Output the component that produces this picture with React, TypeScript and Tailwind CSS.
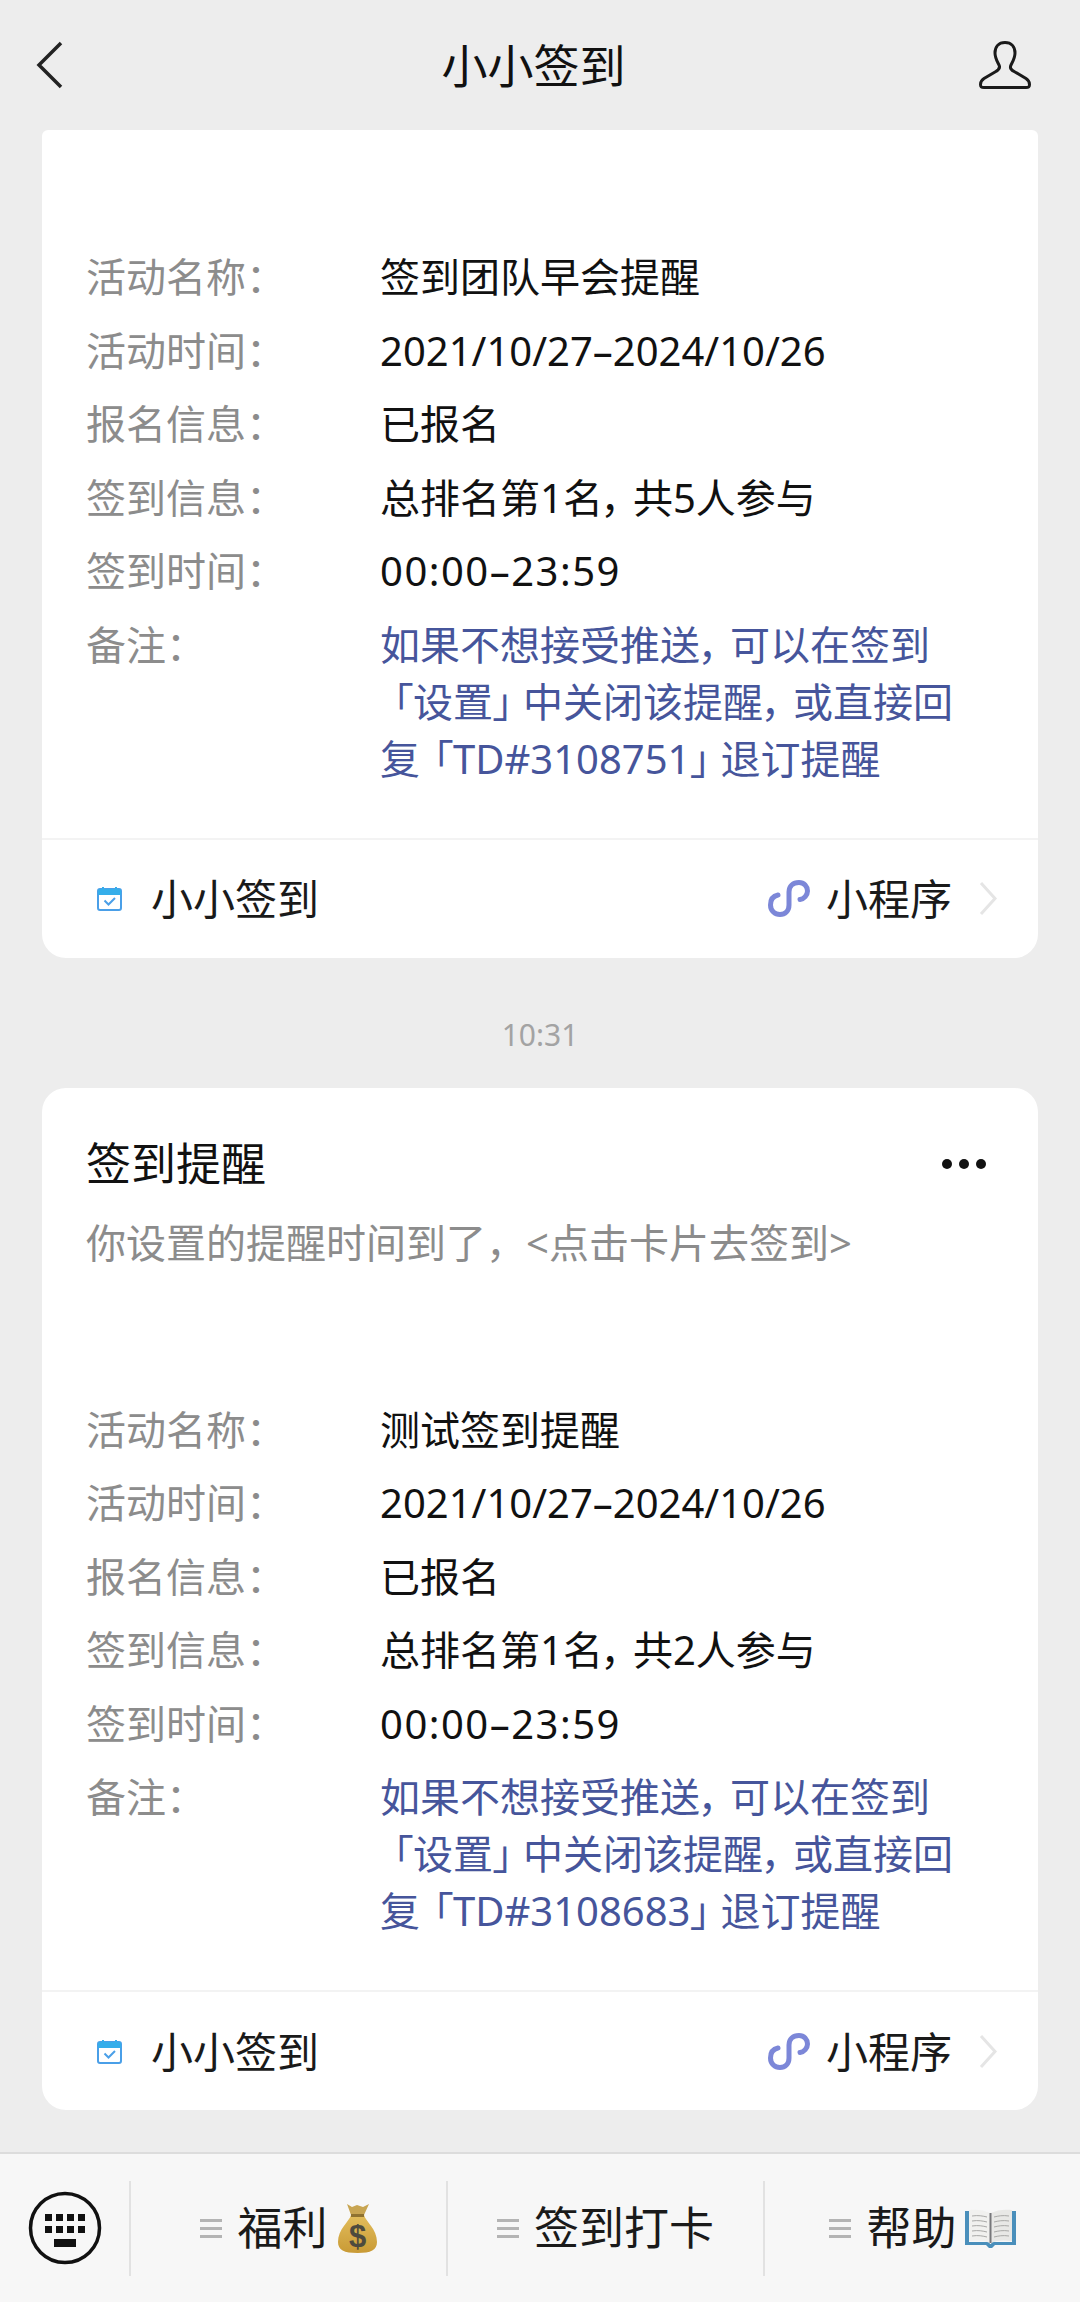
function Comma() {
  return <span className="pr-[10px] [font-feature-settings:'palt']">，</span>;
}

function OpenQuote() {
  return <span className="pl-[13px] [font-feature-settings:'palt']">「</span>;
}

function CloseQuote() {
  return <span className="pr-[10px] [font-feature-settings:'palt']">」</span>;
}

const rowsA = [
  { label: "活动名称：", value: "签到团队早会提醒" },
  { label: "活动时间：", value: "2021/10/27–2024/10/26" },
  { label: "报名信息：", value: "已报名" },
  { label: "签到信息：", value: <>总排名第1名<Comma />共5人参与</> },
  { label: "签到时间：", value: <span className="tracking-[1.5px]">00:00–23:59</span> },
];

const rowsB = [
  { label: "活动名称：", value: "测试签到提醒" },
  { label: "活动时间：", value: "2021/10/27–2024/10/26" },
  { label: "报名信息：", value: "已报名" },
  { label: "签到信息：", value: <>总排名第1名<Comma />共2人参与</> },
  { label: "签到时间：", value: <span className="tracking-[1.5px]">00:00–23:59</span> },
];

function CalendarIcon() {
  return (
    <svg width="25" height="25" viewBox="0 0 25 25" fill="none">
      <rect x="1" y="3" width="23" height="21" rx="2" stroke="#4a9fe8" strokeWidth="2" />
      <path d="M1 9V5a2 2 0 0 1 2-2h19a2 2 0 0 1 2 2v4z" fill="#35aeea" />
      <path d="M6 1v4M19 1v4" stroke="#35aeea" strokeWidth="2" />
      <path d="M7.5 14.5l4 4 6.5-6.5" stroke="#4a9fe8" strokeWidth="2" />
    </svg>
  );
}

function MiniProgramIcon() {
  return (
    <svg width="42" height="37" viewBox="0 0 42 37" fill="none">
      <path
        d="M10 15C5 16 2.5 20 2.5 25C2.5 31 7 34.5 12 34.5C17 34.5 21 31 21 25V12C21 6 25 2.5 31 2.5C36 2.5 39.5 6.5 39.5 11C39.5 15 36 19 32 19.5"
        stroke="#7c87d8"
        strokeWidth="5"
        strokeLinecap="round"
      />
    </svg>
  );
}

function Row({ label, children, blue }: { label: string; children: React.ReactNode; blue?: boolean }) {
  return (
    <div className="flex">
      <div className="w-[294px] shrink-0 text-[#8c8c8c]">{label}</div>
      <div className={blue ? "w-[610px] text-[#46559b]" : "text-[#111111]"}>{children}</div>
    </div>
  );
}

function Details({ rows, code }: { rows: { label: string; value: React.ReactNode }[]; code: string }) {
  return (
    <div className="flex flex-col gap-[16.5px] text-[40px] leading-[57px]">
      {rows.map((r) => (
        <Row key={r.label} label={r.label}>
          {r.value}
        </Row>
      ))}
      <Row label="备注：" blue>
        <div>如果不想接受推送<Comma />可以在签到</div>
        <div><OpenQuote />设置<CloseQuote />中关闭该提醒<Comma />或直接回</div>
        <div>复<OpenQuote />TD#{code}<CloseQuote />退订提醒</div>
      </Row>
    </div>
  );
}

function CardFooter() {
  return (
    <div className="flex h-[120px] items-center border-t-2 border-[#f3f3f3] pl-[55px] pr-[40px]">
      <CalendarIcon />
      <span className="ml-[29px] text-[42px] text-[#1a1a1a]">小小签到</span>
      <div className="ml-auto flex items-center">
        <MiniProgramIcon />
        <span className="ml-[16px] text-[42px] text-[#1a1a1a]">小程序</span>
        <svg className="ml-[26px]" width="20" height="35" viewBox="0 0 20 35" fill="none">
          <path d="M3 2l14 15.5L3 33" stroke="#e5e5e5" strokeWidth="3" />
        </svg>
      </div>
    </div>
  );
}

function MoneyBag() {
  return (
    <svg className="ml-[10px]" width="39" height="50" viewBox="0 0 39 50">
      <defs>
        <linearGradient id="bag" x1="0" y1="0" x2="0" y2="1">
          <stop offset="0" stopColor="#e2bd5c" />
          <stop offset="1" stopColor="#c99a35" />
        </linearGradient>
      </defs>
      <path d="M9 1l5 3 5-2 6 2 6-3-5 11H13z" fill="#c8a552" />
      <path d="M13 12h13c2 7 13 14 13 27 0 8-6 11-19.500 11S0 47 0 39c0-13 11-20 13-27z" fill="url(#bag)" />
      <path d="M13 11h13v3H13z" fill="#8f7230" />
      <text x="19.500" y="44" textAnchor="middle" fontSize="31" fontWeight="700" fill="#4d4a3e" fontFamily="Liberation Sans, sans-serif">
        $
      </text>
    </svg>
  );
}

function BookIcon() {
  return (
    <svg className="ml-[8px]" width="51" height="39" viewBox="0 0 51 39">
      <path d="M0 2h4v31h20l1 2h1l1-2h20V2h4v34H30l-3 3h-3l-3-3H0z" fill="#4a8fbb" />
      <path d="M4 1c8-1 15 0 21 3v30c-6-3-13-3-21-2z" fill="#f1f1ef" />
      <path d="M47 1c-8-1-15 0-21 3v30c6-3 13-3 21-2z" fill="#e8e8e6" />
      <path
        d="M7 7c6-1 11 0 15 1M7 12c6-1 11 0 15 1M7 17c6-1 11 0 15 1M7 22c6-1 11 0 15 1M7 27c6-1 11 0 15 1M44 7c-6-1-11 0-15 1M44 12c-6-1-11 0-15 1M44 17c-6-1-11 0-15 1M44 22c-6-1-11 0-15 1M44 27c-6-1-11 0-15 1"
        stroke="#a9a9a7"
        strokeWidth="1"
        fill="none"
      />
      <path d="M25.500 4v30" stroke="#77777a" strokeWidth="2" />
    </svg>
  );
}

function MenuItem({ label, children }: { label: string; children?: React.ReactNode }) {
  return (
    <div className="flex h-[95px] w-[317px] items-center justify-center border-l-2 border-[#e2e2e2]">
      <div className="flex w-[22px] flex-col gap-[5px]">
        <div className="h-[3px] bg-[#b4b4b4]" />
        <div className="h-[3px] bg-[#b4b4b4]" />
        <div className="h-[3px] bg-[#b4b4b4]" />
      </div>
      <span className="ml-[15px] text-[45px] text-[#1a1a1a]">{label}</span>
      {children}
    </div>
  );
}

export default function App() {
  return (
    <div className="flex h-[2302px] w-[1080px] flex-col overflow-hidden bg-[#ededed] [font-family:'Noto_Sans','Noto_Sans_CJK_SC',sans-serif]">
      {/* Header */}
      <div className="flex h-[130px] shrink-0 items-center justify-between pl-[36px] pr-[49px]">
        <svg width="28" height="48" viewBox="0 0 28 48" fill="none">
          <path d="M25 2L3 24l22 22" stroke="#222222" strokeWidth="3.500" />
        </svg>
        <span className="ml-[24px] text-[46px] text-[#111111]">小小签到</span>
        <svg width="52" height="48" viewBox="0 0 52 48" fill="none">
          <path
            d="M26 1.500C19.500 1.500 16 6 16 12C16 17 18 20 20 24C21.500 27 20 29 16 31L5 37.500C2 39.500 1.500 41 1.500 43.500C1.500 46 2.500 46.500 5 46.500H47C49.500 46.500 50.500 46 50.500 43.500C50.500 41 50 39.500 47 37.500L36 31C32 29 30.500 27 32 24C34 20 36 17 36 12C36 6 32.500 1.500 26 1.500Z"
            stroke="#1a1a1a"
            strokeWidth="3"
          />
        </svg>
      </div>

      {/* Messages */}
      <div className="flex-1 overflow-hidden px-[42px]">
        <div className="rounded-t-[6px] rounded-b-[24px] bg-white">
          <div className="px-[44px] pb-[51px] pt-[118px]">
            <Details rows={rowsA} code="3108751" />
          </div>
          <CardFooter />
        </div>

        <div className="flex h-[130px] items-center justify-center pt-[24px] text-[30px] text-[#a3a3a3]">10:31</div>

        <div className="rounded-[24px] bg-white">
          <div className="px-[44px] pb-[51px] pt-[46px]">
            <div className="flex items-center justify-between pr-[8px]">
              <span className="text-[45px] leading-[60px] text-[#111111]">签到提醒</span>
              <div className="flex gap-[7px]">
                <div className="h-[10px] w-[10px] rounded-full bg-[#111111]" />
                <div className="h-[10px] w-[10px] rounded-full bg-[#111111]" />
                <div className="h-[10px] w-[10px] rounded-full bg-[#111111]" />
              </div>
            </div>
            <div className="mt-[20px] text-[40px] leading-[57px] text-[#8c8c8c]">
              你设置的提醒时间到了，&lt;点击卡片去签到&gt;
            </div>
            <div className="mt-[130px]">
              <Details rows={rowsB} code="3108683" />
            </div>
          </div>
          <CardFooter />
        </div>
      </div>

      {/* Bottom menu */}
      <div className="flex h-[150px] shrink-0 items-center border-t-2 border-[#dcdcdc] bg-[#f7f7f7]">
        <div className="flex w-[129px] shrink-0 justify-center">
          <svg width="74" height="74" viewBox="0 0 74 74" fill="none">
            <circle cx="37" cy="37" r="34.500" stroke="#111111" strokeWidth="3.500" />
            <path
              d="M17 23h7v7h-7zM28 23h7v7h-7zM39 23h7v7h-7zM50 23h7v7h-7zM17 35h7v7h-7zM28 35h7v7h-7zM39 35h7v7h-7zM50 35h7v7h-7zM26 48h22v8H26z"
              fill="#111111"
            />
          </svg>
        </div>
        <MenuItem label="福利">
          <MoneyBag />
        </MenuItem>
        <MenuItem label="签到打卡" />
        <MenuItem label="帮助">
          <BookIcon />
        </MenuItem>
      </div>
    </div>
  );
}
